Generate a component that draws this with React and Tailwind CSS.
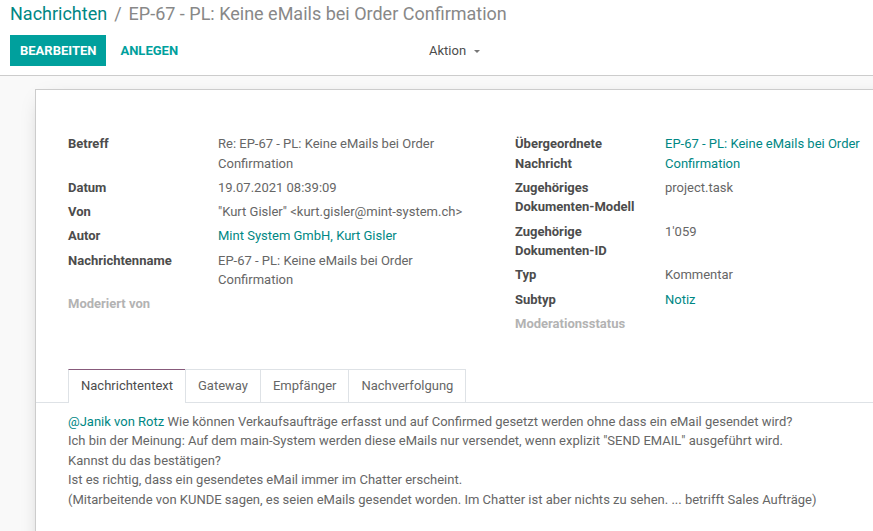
import React from 'react'

const LINK = 'text-[#008784]'

const Field = ({ label, children, empty }) => (
  <div className="flex pb-[4.75px]">
    <div
      className={`w-[150px] shrink-0 pr-[15px] font-bold ${empty ? 'text-[#b3b3b3]' : 'text-[#4c4c4c]'}`}
    >
      {label}
    </div>
    <div className="w-[262px] text-[#666666]">{children}</div>
  </div>
)

const tabs = ['Nachrichtentext', 'Gateway', 'Empfänger', 'Nachverfolgung']

export default function App() {
  return (
    <div
      className="h-[531px] w-[873px] overflow-hidden bg-[#f9f9f9] text-[13px] leading-[19.5px]"
      style={{ fontFamily: 'Roboto, "Liberation Sans", sans-serif' }}
    >
      {/* Control panel */}
      <div className="h-[76px] border-b border-[#cccccc] bg-white px-[10px]">
        <div className="flex items-center pt-[1px] text-[18px] leading-[26px]">
          <span className="text-[#008784]">Nachrichten</span>
          <span className="mx-[7px] text-[#888888]">/</span>
          <span className="text-[#888888]">EP-67 - PL: Keine eMails bei Order Confirmation</span>
        </div>
        <div className="mt-[8px] flex items-center">
          <div className="flex w-[407px] items-center">
            <button className="h-[31px] bg-[#00a09d] px-[10px] font-bold uppercase text-white">
              Bearbeiten
            </button>
            <button className="ml-[4px] h-[31px] px-[10px] font-bold uppercase text-[#00a09d]">
              Anlegen
            </button>
          </div>
          <button className="flex h-[31px] items-center px-3 text-[#4c4c4c]">
            Aktion
            <span className="ml-[8px] mt-[1px] h-0 w-0 border-x-[3.5px] border-t-[3.5px] border-x-transparent border-t-[#777777]" />
          </button>
        </div>
      </div>

      {/* Sheet */}
      <div className="ml-[35px] mt-[13px] h-[500px] w-[900px] border border-[#cccccc] bg-white shadow-[0_5px_20px_-10px_rgba(0,0,0,0.35)]">
        <div className="pl-[32px] pt-[44px]">
          <div className="flex">
            <div className="w-[447px]">
              <Field label="Betreff">Re: EP-67 - PL: Keine eMails bei Order Confirmation</Field>
              <Field label="Datum">19.07.2021 08:39:09</Field>
              <Field label="Von">"Kurt Gisler" &lt;kurt.gisler@mint-system.ch&gt;</Field>
              <Field label="Autor">
                <span className={LINK}>Mint System GmbH, Kurt Gisler</span>
              </Field>
              <Field label="Nachrichtenname">EP-67 - PL: Keine eMails bei Order Confirmation</Field>
              <Field label="Moderiert von" empty />
            </div>
            <div>
              <Field label="Übergeordnete Nachricht">
                <span className={LINK}>EP-67 - PL: Keine eMails bei Order Confirmation</span>
              </Field>
              <Field label="Zugehöriges Dokumenten-Modell">project.task</Field>
              <Field label="Zugehörige Dokumenten-ID">1'059</Field>
              <Field label="Typ">Kommentar</Field>
              <Field label="Subtyp">
                <span className={LINK}>Notiz</span>
              </Field>
              <Field label="Moderationsstatus" empty />
            </div>
          </div>
        </div>

        {/* Notebook */}
        <div className="mt-[31px] flex border-b border-[#dee2e6] pl-[32px]">
          {tabs.map((t, i) => (
            <div
              key={t}
              className={
                i === 0
                  ? '-mb-px border-x border-t border-x-[#dee2e6] border-t-[#875a7b] bg-white px-3 pb-[6.5px] pt-[5.5px] text-[#4c4c4c]'
                  : '-mb-px -ml-px border border-[#dee2e6] px-3 pb-[6.5px] pt-[5.5px] text-[#666666]'
              }
            >
              {t}
            </div>
          ))}
        </div>
        <div className="pl-[32px] pt-[9px] text-[#666666]">
          <p>
            <span className={LINK}>@Janik von Rotz</span> Wie können Verkaufsaufträge erfasst und auf
            Confirmed gesetzt werden ohne dass ein eMail gesendet wird?
          </p>
          <p>
            Ich bin der Meinung: Auf dem main-System werden diese eMails nur versendet, wenn explizit
            "SEND EMAIL" ausgeführt wird.
          </p>
          <p>Kannst du das bestätigen?</p>
          <p>Ist es richtig, dass ein gesendetes eMail immer im Chatter erscheint.</p>
          <p>
            (Mitarbeitende von KUNDE sagen, es seien eMails gesendet worden. Im Chatter ist aber nichts
            zu sehen. ... betrifft Sales Aufträge)
          </p>
        </div>
      </div>
    </div>
  )
}
